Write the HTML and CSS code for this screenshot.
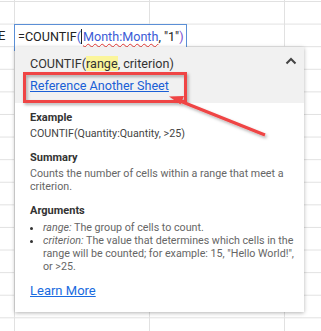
FILE: index.html
```html
<!DOCTYPE html>
<html lang="en">
<head>
  <meta charset="UTF-8" />
  <meta name="viewport" content="width=device-width, initial-scale=1.0" />
  <title>COUNTIF help</title>
  <link rel="stylesheet" href="styles.css">
</head>
<body>
  <div class="sheet">
    <span class="cell-tail">E</span>

    <div class="editor">
      <span class="fn">=COUNTIF</span><span class="paren">(</span><span class="caret"></span><span class="ref">Month:Month</span><span class="fn">, "1"</span><span class="paren-close">)</span>
    </div>

    <div class="popup">
      <div class="popup-head">
        <div class="signature">COUNTIF(<span class="current-arg">range</span>, criterion)</div>
        <a class="ref-link" href="#">Reference Another Sheet</a>
        <svg class="collapse" width="12" height="8" viewBox="0 0 12 8">
          <path d="M1.5 6.5 L6 2 L10.5 6.5" fill="none" stroke="#444" stroke-width="2"/>
        </svg>
      </div>
      <div class="popup-body">
        <div class="label">Example</div>
        <div class="code">COUNTIF(Quantity:Quantity, &gt;25)</div>

        <div class="label gap">Summary</div>
        <div class="text">Counts the number of cells within a range that meet a criterion.</div>

        <div class="label gap">Arguments</div>
        <ul class="args">
          <li><i>range:</i> The group of cells to count.</li>
          <li><i>criterion:</i> The value that determines which cells in the range will be counted; for example: 15, "Hello World!", or &gt;25.</li>
        </ul>

        <a class="learn" href="#">Learn More</a>
      </div>
    </div>

    <!-- annotation drawn on top of the screenshot -->
    <svg class="markup" width="321" height="331" viewBox="0 0 321 331">
      <defs>
        <filter id="shade" x="-10%" y="-10%" width="130%" height="140%">
          <feDropShadow dx="1.5" dy="2" stdDeviation="1.5" flood-color="#000" flood-opacity="0.3"/>
        </filter>
      </defs>
      <g filter="url(#shade)">
        <rect x="24.5" y="73.5" width="161" height="28" fill="none" stroke="#ef4444" stroke-width="3"/>
        <line x1="265" y1="135" x2="180" y2="101" stroke="#ef4444" stroke-width="3"/>
        <polygon points="169,96.5 184,96 180.5,104.5" fill="#ef4444"/>
      </g>
    </svg>
  </div>
</body>
</html>
```

FILE: styles.css
```css
body {
  margin: 0;
  background: #fff;
  font-family: Roboto, "Liberation Sans", Arial, sans-serif;
}
.sheet {
  position: relative;
  width: 321px;
  height: 331px;
  overflow: hidden;
  background-image:
    linear-gradient(to right, #e1e1e1 1px, transparent 1px),
    linear-gradient(to bottom, #e1e1e1 1px, transparent 1px);
  background-size: 135px 100%, 100% 22.6px;
  background-position: 14px 0, 0 1px;
}
.cell-tail {
  position: absolute;
  left: -2px;
  top: 28px;
  font-size: 13px;
  color: #222;
}

/* formula being edited */
.editor {
  position: absolute;
  left: 14px;
  top: 24px;
  width: 168px;
  height: 25px;
  padding-left: 3px;
  border: 1.5px solid #5b8fd6;
  background: #fff;
  font-size: 12.6px;
  line-height: 23px;
  color: #222;
  white-space: nowrap;
}
.paren {
  color: #3b5bd6;
}
.caret {
  display: inline-block;
  width: 1px;
  height: 15px;
  margin: 0 1px -3px 0;
  background: #222;
}
.ref {
  color: #3b5bd6;
  text-decoration: underline wavy #e53935;
  text-decoration-thickness: 1px;
  text-underline-offset: 2px;
}
.paren-close {
  color: #7a4fd0;
}

/* help popup */
.popup {
  position: absolute;
  left: 15px;
  top: 47px;
  width: 289px;
  height: 265px;
  background: #fff;
  box-shadow: 0 1px 4px rgba(0,0,0,0.3);
}
.popup-head {
  position: relative;
  display: flex;
  flex-direction: column;
  align-items: flex-start;
  gap: 6px;
  height: 56px;
  box-sizing: border-box;
  padding: 9px 15px 0;
  background: #f1f1f1;
}
.signature {
  font-size: 12.6px;
  line-height: 16px;
  color: #333;
}
.current-arg {
  background: #fbf59b;
}
.ref-link {
  font-size: 12.6px;
  line-height: 16px;
  color: #1a5fd6;
}
.collapse {
  position: absolute;
  right: 7px;
  top: 10px;
}
.popup-body {
  padding: 8px 9px 0 15px;
  font-size: 10.7px;
  line-height: 13px;
  color: #666;
}
.label {
  font-size: 11px;
  font-weight: bold;
  line-height: 14px;
  color: #333;
}
.label.gap {
  margin-top: 11px;
}
.code {
  margin-top: 2px;
  color: #444;
}
.text {
  margin-top: 2px;
}
.args {
  margin: 3px 0 0;
  padding-left: 13px;
}
.args li::marker {
  color: #333;
}
.learn {
  display: block;
  margin-top: 10px;
  font-size: 13px;
  line-height: 16px;
  color: #1a6be0;
}
.markup {
  position: absolute;
  left: 0;
  top: 0;
  pointer-events: none;
}
```
